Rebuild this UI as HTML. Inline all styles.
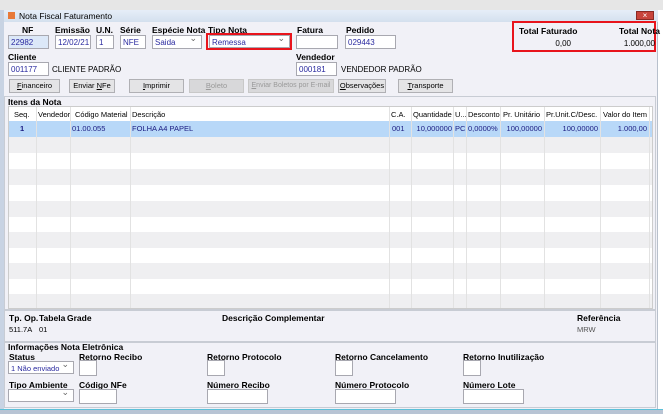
<!DOCTYPE html>
<html><head><meta charset="utf-8"><style>
*{box-sizing:border-box;margin:0;padding:0}
body{width:663px;height:414px;overflow:hidden;background:#fff;font-family:"Liberation Sans",sans-serif;font-size:8px;color:#000;position:relative}
.a{position:absolute;white-space:nowrap}
.b{font-weight:bold;font-size:8.5px}
.in{position:absolute;background:#fff;border:1px solid #a8a8b0;font-size:8px;color:#2a2aa0;padding:2px 2px;line-height:9px;overflow:hidden;white-space:nowrap}
.btn{position:absolute;height:14px;background:#e4e4e6;border:1px solid #b0b0b4;font-size:7.5px;text-align:center;line-height:12px;white-space:nowrap;overflow:hidden}
.dis{color:#9a9a9a;background:#d8d8da;border-color:#c8c8c8}
.sel:after{content:"⌄";position:absolute;right:4px;top:-2px;color:#666;font-size:9px}
.grid{position:absolute;left:8px;top:106px;width:645px;height:203px;background:#fff;border:1px solid #ccc;overflow:hidden;font-size:7.5px}
.vl{position:absolute;top:0;height:203px;width:1px;background:#e2e2e2}
.row{position:absolute;left:0;width:645px;height:16px}
.gb{position:absolute;border:1px solid #c8ccd4}
.d{color:#1a1a80}
</style></head><body>
<div class="a" style="left:0;top:0;width:663px;height:10px;background:#e6e6e6"></div>
<div class="a" style="left:0;top:10px;width:4px;height:400px;background:#c8d3e3"></div>
<div class="a" style="left:4px;top:10px;width:654px;height:400px;background:#f1f1f7;border-right:1px solid #b8c0cc"></div>
<div class="a" style="left:4px;top:10px;width:654px;height:12px;background:linear-gradient(#e6eef8,#d4e0ee)"></div>
<div class="a" style="left:8px;top:12px;width:7px;height:7px;background:#e87a3a"></div>
<div class="a" style="left:19px;top:11px;font-size:8.5px">Nota Fiscal Faturamento</div>
<div class="a" style="left:636px;top:11px;width:18px;height:9px;background:#c8443c;border:1px solid #8a2a24;color:#fff;font-size:8px;text-align:center;line-height:7px">×</div>
<div class="a" style="left:512px;top:21px;width:144px;height:31px;border:2px solid #e8141c"></div>
<div class="a b" style="left:519px;top:26px">Total Faturado</div>
<div class="a b" style="left:619px;top:26px">Total Nota</div>
<div class="a" style="left:540px;top:39px;width:31px;text-align:right">0,00</div>
<div class="a" style="left:615px;top:39px;width:40px;text-align:right">1.000,00</div>

<div class="a b" style="left:22px;top:25px">NF</div>
<div class="a b" style="left:55px;top:25px">Emissão</div>
<div class="a b" style="left:96px;top:25px">U.N.</div>
<div class="a b" style="left:120px;top:25px">Série</div>
<div class="a b" style="left:152px;top:25px">Espécie Nota</div>
<div class="a b" style="left:208px;top:25px">Tipo Nota</div>
<div class="a b" style="left:297px;top:25px">Fatura</div>
<div class="a b" style="left:346px;top:25px">Pedido</div>
<div class="in" style="left:8px;top:35px;width:41px;height:14px;background:#dce8f8">22982</div>
<div class="in" style="left:55px;top:35px;width:36px;height:14px">12/02/21</div>
<div class="in" style="left:96px;top:35px;width:18px;height:14px">1</div>
<div class="in" style="left:120px;top:35px;width:26px;height:14px">NFE</div>
<div class="in sel" style="left:152px;top:35px;width:50px;height:14px">Saida</div>
<div class="in sel" style="left:209px;top:35px;width:81px;height:13px">Remessa</div>
<div class="a" style="left:206px;top:33px;width:86px;height:17px;border:2px solid #e8141c"></div>
<div class="in" style="left:296px;top:35px;width:42px;height:14px"></div>
<div class="in" style="left:345px;top:35px;width:51px;height:14px">029443</div>

<div class="a b" style="left:8px;top:52px">Cliente</div>
<div class="in" style="left:8px;top:62px;width:41px;height:14px">001177</div>
<div class="a" style="left:52px;top:65px">CLIENTE PADRÃO</div>
<div class="a b" style="left:296px;top:52px">Vendedor</div>
<div class="in" style="left:296px;top:62px;width:41px;height:14px">000181</div>
<div class="a" style="left:341px;top:65px">VENDEDOR PADRÃO</div>

<div class="btn" style="left:9px;top:79px;width:51px"><u>F</u>inanceiro</div>
<div class="btn" style="left:69px;top:79px;width:46px">Enviar <u>N</u>Fe</div>
<div class="btn" style="left:129px;top:79px;width:55px"><u>I</u>mprimir</div>
<div class="btn dis" style="left:189px;top:79px;width:55px"><u>B</u>oleto</div>
<div class="btn dis" style="left:248px;top:79px;width:86px;font-size:7px"><u>E</u>nviar Boletos por E-mail</div>
<div class="btn" style="left:338px;top:79px;width:48px"><u>O</u>bservações</div>
<div class="btn" style="left:398px;top:79px;width:55px"><u>T</u>ransporte</div>

<div class="gb" style="left:4px;top:96px;width:652px;height:214px"></div>
<div class="a b" style="left:8px;top:97px">Itens da Nota</div>
<div class="grid">
 <div class="row" style="top:0;height:14px;background:#fff"></div>
 <div class="row" style="top:14px;background:#b8d8f8"></div>
 <div class="row" style="top:30px;background:#efeff1"></div>
 <div class="row" style="top:62px;background:#efeff1"></div>
 <div class="row" style="top:94px;background:#efeff1"></div>
 <div class="row" style="top:125px;background:#efeff1"></div>
 <div class="row" style="top:156px;background:#efeff1"></div>
 <div class="row" style="top:187px;background:#efeff1"></div>
 <div class="vl" style="left:27px"></div><div class="vl" style="left:61px"></div><div class="vl" style="left:121px"></div><div class="vl" style="left:380px"></div><div class="vl" style="left:402px"></div><div class="vl" style="left:444px"></div><div class="vl" style="left:457px"></div><div class="vl" style="left:491px"></div><div class="vl" style="left:535px"></div><div class="vl" style="left:591px"></div><div class="vl" style="left:640px"></div>
 <div class="a" style="left:5px;top:3px">Seq.</div>
 <div class="a" style="left:29px;top:3px">Vendedor</div>
 <div class="a" style="left:66px;top:3px">Código Material</div>
 <div class="a" style="left:123px;top:3px">Descrição</div>
 <div class="a" style="left:382px;top:3px">C.A.</div>
 <div class="a" style="left:404px;top:3px">Quantidade</div>
 <div class="a" style="left:446px;top:3px">U...</div>
 <div class="a" style="left:459px;top:3px">Desconto</div>
 <div class="a" style="left:494px;top:3px">Pr. Unitário</div>
 <div class="a" style="left:537px;top:3px">Pr.Unit.C/Desc.</div>
 <div class="a" style="left:594px;top:3px">Valor do Item</div>
 <div class="a d" style="left:11px;top:17px;font-weight:bold">1</div>
 <div class="a d" style="left:63px;top:17px">01.00.055</div>
 <div class="a d" style="left:123px;top:17px">FOLHA A4 PAPEL</div>
 <div class="a d" style="left:383px;top:17px">001</div>
 <div class="a d" style="left:403px;top:17px;width:40px;text-align:right">10,000000</div>
 <div class="a d" style="left:446px;top:17px">PC</div>
 <div class="a d" style="left:459px;top:17px">0,0000%</div>
 <div class="a d" style="left:492px;top:17px;width:41px;text-align:right">100,00000</div>
 <div class="a d" style="left:536px;top:17px;width:53px;text-align:right">100,00000</div>
 <div class="a d" style="left:592px;top:17px;width:46px;text-align:right">1.000,00</div>
</div>

<div class="gb" style="left:4px;top:310px;width:652px;height:32px"></div>
<div class="a b" style="left:9px;top:313px">Tp. Op.</div>
<div class="a b" style="left:39px;top:313px">Tabela</div>
<div class="a b" style="left:67px;top:313px">Grade</div>
<div class="a b" style="left:222px;top:313px">Descrição Complementar</div>
<div class="a b" style="left:577px;top:313px">Referência</div>
<div class="a" style="left:9px;top:325px;font-size:7.5px">511.7A</div>
<div class="a" style="left:39px;top:325px;font-size:7.5px">01</div>
<div class="a" style="left:577px;top:325px;font-size:7.5px;color:#555">MRW</div>

<div class="gb" style="left:4px;top:342px;width:652px;height:66px"></div>
<div class="a b" style="left:8px;top:342px">Informações Nota Eletrônica</div>
<div class="a b" style="left:9px;top:352px">Status</div>
<div class="a b" style="left:79px;top:352px">Retorno Recibo</div>
<div class="a b" style="left:207px;top:352px">Retorno Protocolo</div>
<div class="a b" style="left:335px;top:352px">Retorno Cancelamento</div>
<div class="a b" style="left:463px;top:352px">Retorno Inutilização</div>
<div class="in sel" style="left:8px;top:361px;width:66px;height:13px;font-size:7.5px">1 Não enviado</div>
<div class="in" style="left:79px;top:360px;width:18px;height:16px"></div>
<div class="in" style="left:207px;top:360px;width:18px;height:16px"></div>
<div class="in" style="left:335px;top:360px;width:18px;height:16px"></div>
<div class="in" style="left:463px;top:360px;width:18px;height:16px"></div>
<div class="a b" style="left:9px;top:380px">Tipo Ambiente</div>
<div class="a b" style="left:79px;top:380px">Código NFe</div>
<div class="a b" style="left:207px;top:380px">Número Recibo</div>
<div class="a b" style="left:335px;top:380px">Número Protocolo</div>
<div class="a b" style="left:463px;top:380px">Número Lote</div>
<div class="in sel" style="left:8px;top:389px;width:66px;height:13px"></div>
<div class="in" style="left:79px;top:389px;width:38px;height:15px"></div>
<div class="in" style="left:207px;top:389px;width:61px;height:15px"></div>
<div class="in" style="left:335px;top:389px;width:61px;height:15px"></div>
<div class="in" style="left:463px;top:389px;width:61px;height:15px"></div>
<div class="a" style="left:0;top:409px;width:663px;height:1px;background:#5cc0d8"></div>
<div class="a" style="left:0;top:410px;width:663px;height:4px;background:#b8c4d4"></div>
</body></html>
